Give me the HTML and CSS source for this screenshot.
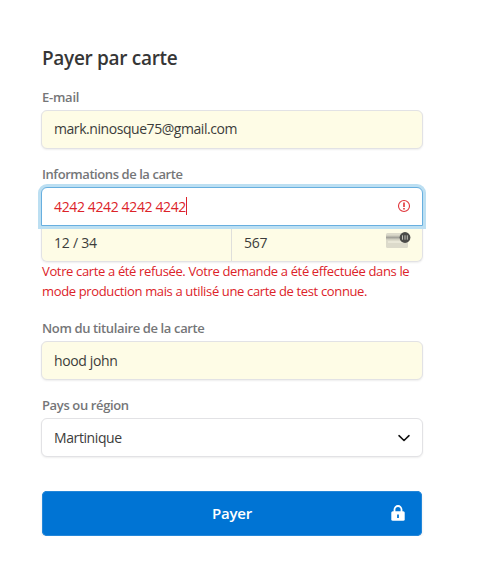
FILE: index.html
```html
<!DOCTYPE html>
<html lang="fr">
<head>
<meta charset="utf-8">
<title>Payer par carte</title>
<link rel="stylesheet" href="styles.css">
</head>
<body>
<main class="checkout">
  <h1 class="title">Payer par carte</h1>
  <div class="label label-email">E-mail</div>
  <div class="field filled"><span class="email">mark.ninosque75@gmail.com</span></div>
  <div class="label label-card">Informations de la carte</div>
  <div class="card-group">
    <div class="field number"><span>4242 4242 4242 4242</span><i class="caret"></i>
      <svg class="alert" width="14" height="14" viewBox="0 0 14 14"><circle cx="7" cy="7" r="5.5" fill="none" stroke="#e0353a" stroke-width="1.1"/><path d="M7 3.5v4.4M7 9.1v1.5" stroke="#e0262b" stroke-width="1.5"/></svg>
    </div>
    <div class="card-row">
      <div class="half"><span>12 / 34</span></div>
      <div class="half cvc"><span>567</span>
        <svg class="cvc-icon" width="26" height="18" viewBox="0 0 26 18"><defs><linearGradient id="stripe" x2="0" y2="1"><stop offset="0" stop-color="#dcdacb"/><stop offset=".5" stop-color="#a3a29a"/><stop offset="1" stop-color="#dcdacb"/></linearGradient></defs><rect x="1" y="2" width="22" height="15" rx="1.5" fill="#dcdacb"/><path d="M1 4h16v5H1z" fill="url(#stripe)"/><path d="M3 10h18v2H3z" fill="#e9e7d8"/><circle cx="20" cy="6.5" r="5.4" fill="#4b4b49"/><path d="M17.5 4.3v4.4M20 4.3v4.4M22.3 4.3v4.4" stroke="#c4c3bc" stroke-width="1"/></svg>
      </div>
    </div>
  </div>
  <div class="error"><div>Votre carte a été refusée. Votre demande a été effectuée dans le</div><div>mode production mais a utilisé une carte de test connue.</div></div>
  <div class="label label-name">Nom du titulaire de la carte</div>
  <div class="field filled"><span>hood john</span></div>
  <div class="label">Pays ou région</div>
  <div class="field"><span class="country">Martinique</span>
    <svg class="chevron" width="14" height="10" viewBox="0 0 14 10"><path d="M2 2.7l5 4.8 5-4.8" fill="none" stroke="#111" stroke-width="1.6" stroke-linecap="round" stroke-linejoin="round"/></svg>
  </div>
  <div class="button"><span>Payer</span>
    <svg class="lock" width="14" height="16" viewBox="0 0 14 16"><path d="M3.5 7V4.5a3.5 3.5 0 0 1 7 0V7" fill="none" stroke="#fff" stroke-width="1.8"/><rect x=".3" y="6.2" width="13.4" height="9.6" rx="1.5" fill="#fff"/><path d="M6.1 9.5h1.8v3.4H6.1z" fill="#0074d4"/></svg>
  </div>
</main>
</body>
</html>
```
FILE: styles.css
```css
* { box-sizing: border-box; }
body { margin: 0; background: #fff; font-family: "Open Sans", "Noto Sans", sans-serif; color: #3c3c3b; }
.checkout { width: 382px; margin-left: 41px; padding-top: 45px; }
.title { margin: 0 0 0 1px; height: 26px; line-height: 26px; font-size: 19px; font-weight: 600; color: #363636; white-space: nowrap; letter-spacing: -.31px; }
.label { height: 20px; line-height: 20px; margin: 15px 0 3px 1px; font-size: 13px; font-weight: 600; color: #757678; letter-spacing: -.37px; white-space: nowrap; }
.label-email { margin: 16px 0 3px 1px; letter-spacing: -.25px; }
.label-card { letter-spacing: -.43px; }
.field { position: relative; display: flex; align-items: center; height: 39px; padding: 0 12px 1px; border: 1px solid #e2e2e5; border-radius: 6px; background: #fff; box-shadow: 0 1px 2px rgba(0,0,0,.07); font-size: 14px; letter-spacing: -.37px; white-space: nowrap; }
.filled { background: #fefce6; }
.email { letter-spacing: -.44px; margin-top: -1px; }
.country { letter-spacing: -.4px; margin-top: 1px; }
.card-group { border-radius: 6px; box-shadow: 0 1px 2px rgba(0,0,0,.07); }
.number { z-index: 1; border-color: #68afdf; border-radius: 6px 6px 0 0; color: #dc2329; box-shadow: 0 0 0 3px #bcdff2; }
.caret { width: 1px; height: 18px; background: #dc2329; }
.alert { margin-left: auto; margin-right: -1px; }
.card-row { display: flex; height: 36px; border: 1px solid #e2e2e5; border-top: 0; border-radius: 0 0 6px 6px; overflow: hidden; background: #fefce6; font-size: 14px; letter-spacing: -.25px; }
.half { flex: 0 0 189px; display: flex; align-items: center; padding: 0 0 3px 12px; }
.cvc { flex: 1; border-left: 1px solid #dfdfdb; }
.cvc-icon { margin: -5px 11px 0 auto; }
.error { margin: -1px 0 0 1px; color: #dc2329; font-size: 13px; line-height: 20px; white-space: nowrap; letter-spacing: -.355px; }
.label-name { margin-top: 17px; }
.chevron { margin: 2px -1px 0 auto; }
.button { position: relative; display: flex; align-items: center; justify-content: center; width: 380px; height: 45px; padding-bottom: 1px; margin: 34px 0 0 1px; border-radius: 5px; background: #0074d4; box-shadow: inset 0 0 0 1px #2487d9, 0 2px 3px rgba(0,0,0,.09); color: #fff; font-size: 15px; font-weight: 600; letter-spacing: -.2px; }
.lock { position: absolute; right: 17px; top: 14px; }
```
